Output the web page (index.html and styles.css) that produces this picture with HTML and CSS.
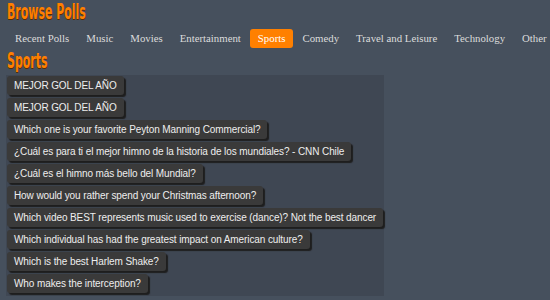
FILE: index.html
```html
<!DOCTYPE html>
<html>
<head>
<meta charset="utf-8">
<link rel="stylesheet" href="styles.css">
</head>
<body>
<h1 class="title"><span class="squeeze">Browse Polls</span></h1>
<nav class="nav">
  <a class="nav-item">Recent Polls</a>
  <a class="nav-item">Music</a>
  <a class="nav-item">Movies</a>
  <a class="nav-item">Entertainment</a>
  <a class="nav-item active">Sports</a>
  <a class="nav-item">Comedy</a>
  <a class="nav-item">Travel and Leisure</a>
  <a class="nav-item">Technology</a>
  <a class="nav-item">Other</a>
</nav>
<h2 class="title section"><span class="squeeze">Sports</span></h2>
<div class="panel">
  <a class="poll">MEJOR GOL DEL AÑO</a>
  <a class="poll">MEJOR GOL DEL AÑO</a>
  <a class="poll">Which one is your favorite Peyton Manning Commercial?</a>
  <a class="poll">¿Cuál es para ti el mejor himno de la historia de los mundiales? - CNN Chile</a>
  <a class="poll">¿Cuál es el himno más bello del Mundial?</a>
  <a class="poll">How would you rather spend your Christmas afternoon?</a>
  <a class="poll">Which video BEST represents music used to exercise (dance)? Not the best dancer</a>
  <a class="poll">Which individual has had the greatest impact on American culture?</a>
  <a class="poll">Which is the best Harlem Shake?</a>
  <a class="poll">Who makes the interception?</a>
</div>
</body>
</html>
```

FILE: styles.css
```css
html, body {
  margin: 0;
  padding: 0;
  background: #46505d;
  overflow: hidden;
}
body {
  padding: 0 0 0 7px;
}
.title {
  margin: 0;
  font-family: "DejaVu Sans Condensed", "DejaVu Sans", sans-serif;
  font-weight: bold;
  font-size: 21px;
  line-height: 24px;
  height: 24px;
  color: #ff8000;
  text-shadow: 1px 1px 0 #5a2a00;
  white-space: nowrap;
}
.squeeze {
  display: inline-block;
  transform: scaleX(0.58);
  transform-origin: 0 0;
}
.section {
  height: 26px;
  padding-top: 1px;
}
.nav {
  display: flex;
  white-space: nowrap;
  gap: 1px;
  margin-top: 5px;
  height: 19px;
}
.nav-item {
  font-family: "Liberation Serif", serif;
  font-size: 10.8px;
  line-height: 18px;
  color: #dcdcdc;
  padding: 0 8px;
  border-radius: 3px;
}
.nav-item.active {
  background: #ff8000;
  color: #fff;
}
.panel {
  margin-left: -1px;
  width: 377px;
  background: #3f4753;
  padding: 1px 0 3px 1px;
  display: flex;
  flex-direction: column;
  align-items: flex-start;
  gap: 3px;
}
.poll {
  font-family: "Liberation Sans", sans-serif;
  font-size: 10px;
  letter-spacing: -0.1px;
  line-height: 19px;
  color: #eee;
  background: #3a3a3a;
  padding: 0 7px;
  border-radius: 3px;
  box-shadow: 2px 2px 1px #1e1e1e;
  white-space: nowrap;
}
```
